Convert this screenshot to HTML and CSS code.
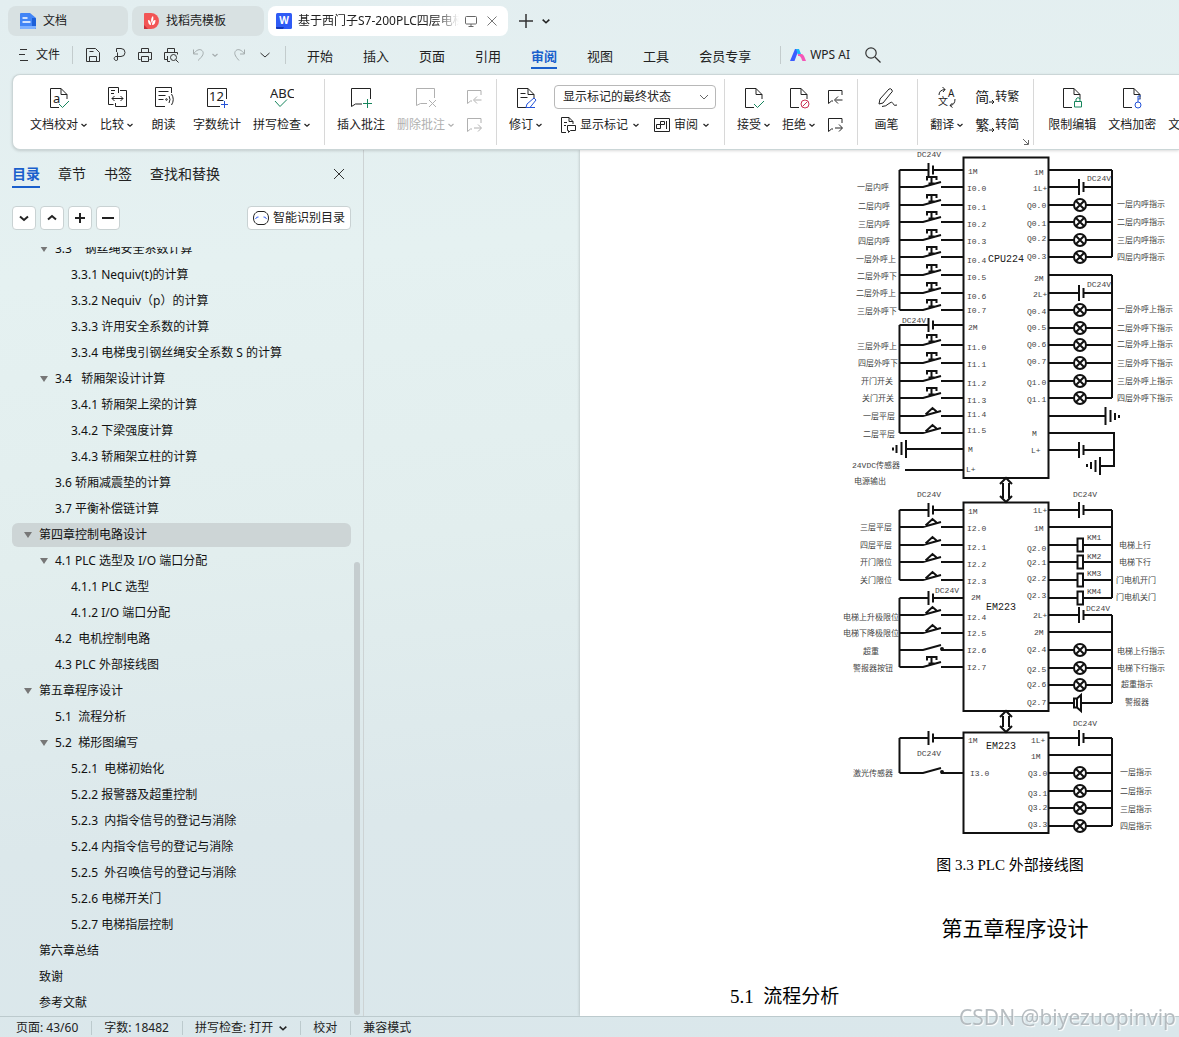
FILE: index.html
```
<!DOCTYPE html>
<html lang="zh-CN">
<head>
  <meta charset="UTF-8" />
  <meta name="viewport" content="width=device-width, initial-scale=1" />
  <title>基于西门子S7-200PLC四层电梯</title>
  <link rel="stylesheet" href="styles.css">
</head>
<body>
  <!-- shared icon shapes -->
  <svg class="defs" width="0" height="0" aria-hidden="true">
    <symbol id="caret" viewBox="0 0 6 6"><path d="M.5 2 3 4.300 5.500 2" fill="none" stroke="currentColor" stroke-width="1.200"/></symbol>
    <symbol id="page" viewBox="0 0 24 24"><path d="M14 3.500H3.500v19H12M14 3.500l6 6V14M14 3.500v6h6" fill="none" stroke="currentColor"/></symbol>
    <symbol id="prev" viewBox="0 0 16 16"><path d="M15 6V1.500H1.500v13l3-2.500H6M15.500 11h-7M11 7.500 7.500 11l3.500 3.500" fill="none" stroke="currentColor"/></symbol>
    <symbol id="next" viewBox="0 0 16 16"><path d="M15 6V1.500H1.500v13l3-2.500H6M8 11h7M12 7.500l3.500 3.500-3.500 3.500" fill="none" stroke="currentColor"/></symbol>

    <!-- circuit parts, origin on the wire -->
    <g id="cell-l"><path d="M59.500 0h29M93 0h30M88.500-7V7M93-4.500v9"/></g>
    <g id="cell-r"><path d="M208.500 0h30.500M243.500 0H272M239-8V8M243.500-5v10"/></g>
    <g id="open"><path d="M59.500 0H83l18-5M101 0h22"/></g>
    <g id="push"><path d="M59.500 0H83l18-5M101 0h22M87-6.500V-10h9.500v3M91.500-10v6.500M88.500-3.500h6"/></g>
    <g id="limit"><path d="M59.500 0H83l18-5M101 0h22M85.500-1.500l7-6.500 4 3.500"/></g>
    <g id="dot"><path d="M59.500 0H83l18-5M101 0h22"/><circle cx="102" cy="-1" r="1"/></g>
    <g id="lamp"><path d="M208.500 0H234M246 0h26M236-4l8 8M244-4l-8 8"/><circle cx="240" cy="0" r="6"/></g>
    <g id="coil"><path d="M208.500 0h29M243 0h29M237.500-6.500h5.500v13h-5.500z"/></g>
    <g id="horn"><path d="M208.500 0H234M241 0h31M234-4.500h3v9h-3zM237-4.500l4-3.500V8l-4-3.500"/></g>
    <g id="bare"><path d="M208.500 0H272"/></g>
  </svg>

  <header>
    <div class="titlebar">
      <button class="doc-tab">
        <svg width="16" height="16" viewBox="0 0 16 16"><path d="M1 0h9l6 5v10a1 1 0 0 1-1 1H1a1 1 0 0 1-1-1V1a1 1 0 0 1 1-1z" fill="#4285f6"/><path d="M12 5h3a1 1 0 0 1 1 1v9a1 1 0 0 1-1 1h-3z" fill="#1c5fd8"/><path d="M0 13h16v2a1 1 0 0 1-1 1H1a1 1 0 0 1-1-1z" fill="#7db0ff"/><path d="M2.500 5h5M2.500 9h8" stroke="#fff" stroke-width="1.400"/></svg>
        <span>文档</span>
      </button>
      <button class="doc-tab second">
        <svg width="15" height="16" viewBox="0 0 15 16"><path d="M0 1a1 1 0 0 1 1-1h6a8 8 0 0 1 0 16H0z" fill="#f25555"/><path d="M0 12l4 4H0z" fill="#c62f3a"/><path d="M4 7c2 0 3 2 3 5-2 0-3-2-3-5zM7.500 10c-1-3 0-6 1.500-7 1 3 0 5-1.500 7zM8 12c0-3 1-5 3.500-5 0 3-1 5-3.500 5z" fill="#fff"/></svg>
        <span>找稻壳模板</span>
      </button>
      <div class="doc-tab current">
        <svg width="16" height="16" viewBox="0 0 16 16"><rect width="16" height="16" rx="1.500" fill="#2f5bf5"/><path d="M0 14h8l-1 2H1.500A1.500 1.500 0 0 1 0 14z" fill="#1237b8"/><text x="8" y="11" text-anchor="middle" class="w-mark">W</text></svg>
        <span class="fade">基于西门子S7-200PLC四层电梯</span>
        <svg width="12" height="12" viewBox="0 0 12 12" fill="none" stroke="#666"><rect x=".5" y="1.500" width="11" height="7.500" rx="1"/><path d="M3.500 11.500h5M6 9v2"/></svg>
        <button class="plain close" aria-label="关闭标签"><svg width="10" height="10" viewBox="0 0 10 10" stroke="#777"><path d="M.5.5l9 9M9.500.5l-9 9"/></svg></button>
      </div>
      <button class="plain add" aria-label="新建"><svg width="14" height="14" viewBox="0 0 14 14" stroke="#333" stroke-width="1.500"><path d="M7 0v14M0 7h14"/></svg></button>
      <button class="plain" aria-label="标签列表"><svg width="8" height="8"><use href="#caret"/></svg></button>
    </div>

    <div class="menubar">
      <button class="plain file"><svg width="9" height="12" viewBox="0 0 9 12" stroke="#333"><path d="M1 .5h7M0 5.500h6M1 11.500h8"/></svg>文件</button>
      <i class="rule"></i>
      <div class="quick">
        <button class="plain" aria-label="保存"><svg width="16" height="16" viewBox="0 0 16 16"><path d="M1.500 1.500h9l4 4v9h-13zM4.500 14V9.500h7V14M4.500 4.500h4"/></svg></button>
        <button class="plain" aria-label="输出为PDF"><svg width="16" height="16" viewBox="0 0 16 16"><path d="M5.500 5V1.500H10a3.700 3.700 0 0 1 0 8H5a2 2 0 1 0 1.500 3.500V5.500"/></svg></button>
        <button class="plain" aria-label="打印"><svg width="16" height="16" viewBox="0 0 16 16"><path d="M4.500 5V1.500h7V5M3.500 12.500h-2v-7h13v7h-2M4.500 9.500h7v5h-7z"/></svg></button>
        <button class="plain" aria-label="打印预览"><svg width="16" height="16" viewBox="0 0 16 16"><path d="M4.500 5V1.500h7V5M4 12.500H1.500v-7h13v2M4.500 9v5.500H7M13 13l2.500 2.500"/><circle cx="10.500" cy="10.500" r="3"/></svg></button>
        <button class="plain off" aria-label="撤销"><svg width="14" height="14" viewBox="0 0 14 14"><path d="M1.500 1.500v4.500H6M1.500 6C4 2 8 .5 10 2.500c2.500 2.500 1 5.500-4 10"/></svg><svg class="tiny" width="6" height="6"><use href="#caret"/></svg></button>
        <button class="plain off" aria-label="恢复"><svg width="14" height="14" viewBox="0 0 14 14"><path d="M12.500 1.500v4.500H8M12.500 6C10 2 6 .5 4 2.500 1.500 5 3 8 7 12.500"/></svg></button>
        <button class="plain" aria-label="更多"><svg width="10" height="10" viewBox="0 0 10 10"><path d="M.5 3 5 7l4.500-4"/></svg></button>
      </div>
      <i class="rule"></i>
      <nav class="menu">
        <a href="#">开始</a><a href="#">插入</a><a href="#">页面</a><a href="#">引用</a><a href="#" class="active">审阅</a><a href="#">视图</a><a href="#">工具</a><a href="#">会员专享</a>
      </nav>
      <i class="rule"></i>
      <button class="plain ai">
        <svg width="16" height="12" viewBox="0 0 16 12"><path d="M5 0h4L4.500 12H0z" fill="#3b5cff"/><path d="M6 0h3l2 5-3 1z" fill="#18b7f5"/><path d="M8 5h3.500c2 0 3 3 4.500 7h-3.500C11 9 11 7 8 7z" fill="#f456b8"/></svg>
        WPS AI
      </button>
      <button class="plain" aria-label="搜索"><svg width="16" height="16" viewBox="0 0 16 16" fill="none" stroke="#333" stroke-width="1.200"><circle cx="6" cy="6" r="5.200"/><path d="M10 10l5.500 5.500"/></svg></button>
    </div>
  </header>

  <div class="ribbon">
    <div class="group">
      <button class="tool"><svg width="24" height="24"><use href="#page"/><text x="6" y="18" class="glyph">a</text><path d="M12 19l3.500 3.500L22 16" class="green"/></svg><span>文档校对<svg class="tiny" width="6" height="6"><use href="#caret"/></svg></span></button>
      <button class="tool"><svg width="24" height="24" viewBox="0 0 24 24"><path d="M13.500 8V2.500h-10v17h5M15 5.500h6.500v16h-11V18M6 5.500h4M6 8.500h3M7 13.500h11M9.500 11 7 13.500 9.500 16M15.500 11l2.500 2.500-2.500 2.500"/></svg><span>比较<svg class="tiny" width="6" height="6"><use href="#caret"/></svg></span></button>
      <button class="tool"><svg width="24" height="24" viewBox="0 0 24 24"><path d="M19.500 8V2.500h-16v19H13M6.500 6.500h10M6.500 10.500h7M6.500 14.500h5M17 11q2 3.500 0 7M19.500 9q3.500 5.500 0 11"/><circle cx="14.500" cy="14.500" r=".8"/></svg><span>朗读</span></button>
      <button class="tool"><svg width="24" height="24" viewBox="0 0 24 24"><path d="M21.500 14V3.500h-19v18H15"/><text x="4" y="16" class="glyph">12</text><path d="M19.500 16v7M16 19.500h7" class="blue"/></svg><span>字数统计</span></button>
      <button class="tool"><svg width="24" height="24" viewBox="0 0 24 24"><text x="0" y="13" class="glyph">ABC</text><path d="M5 16l5 5.500 7-7" class="green"/></svg><span>拼写检查<svg class="tiny" width="6" height="6"><use href="#caret"/></svg></span></button>
    </div>
    <div class="group">
      <button class="tool"><svg width="24" height="24" viewBox="0 0 24 24"><path d="M21.500 14V3.500h-19v18l4-2.500H13"/><path d="M18.500 14v9M14 18.500h9" class="green"/></svg><span>插入批注</span></button>
      <button class="tool" disabled><svg width="24" height="24" viewBox="0 0 24 24"><path d="M20.500 13V3.500h-18v17l4-2H13M15 15l7 7M22 15l-7 7"/></svg><span>删除批注<svg class="tiny" width="6" height="6"><use href="#caret"/></svg></span></button>
      <div class="stack">
        <button class="plain" disabled aria-label="上一条批注"><svg width="16" height="16"><use href="#prev"/></svg></button>
        <button class="plain" disabled aria-label="下一条批注"><svg width="16" height="16"><use href="#next"/></svg></button>
      </div>
    </div>
    <div class="group track">
      <button class="tool"><svg width="24" height="24"><use href="#page"/><path d="M6.500 8.500h5M6.500 12.500h7"/><path d="M12 22.500l1-3.500 7-6 2 2-6 7.500zM12 22.500h9" class="blue"/></svg><span>修订<svg class="tiny" width="6" height="6"><use href="#caret"/></svg></span></button>
      <div class="stack">
        <div class="select-box">
          <select aria-label="修订显示状态"><option>显示标记的最终状态</option></select>
          <svg width="10" height="10" viewBox="0 0 10 10"><path d="M1 3l4 4 4-4"/></svg>
        </div>
        <div class="pair">
          <button class="plain"><svg width="16" height="16" viewBox="0 0 16 16"><path d="M6 15.500H1.500V.5H9l4 4V7M9 .5v4h4M4 5.500h3M4 8.500h2M7.500 8.500h8v5h-5l-2 2v-2h-1z"/></svg>显示标记<svg class="tiny" width="6" height="6"><use href="#caret"/></svg></button>
          <button class="plain"><svg width="16" height="16" viewBox="0 0 16 16"><path d="M.5 1.500h15v13H.5zM12.500 4v8M6.500 4.500h4v3h-4zM2.500 7.500h4v4h-4z"/></svg>审阅<svg class="tiny" width="6" height="6"><use href="#caret"/></svg></button>
        </div>
      </div>
    </div>
    <div class="group">
      <button class="tool"><svg width="24" height="24"><use href="#page"/><path d="M12 19l3.500 3.500L22 16" class="green"/></svg><span>接受<svg class="tiny" width="6" height="6"><use href="#caret"/></svg></span></button>
      <button class="tool"><svg width="24" height="24"><use href="#page"/><circle cx="18" cy="19" r="4" class="red"/><path d="M15.500 21.500l5-5" class="red"/></svg><span>拒绝<svg class="tiny" width="6" height="6"><use href="#caret"/></svg></span></button>
      <div class="stack">
        <button class="plain" aria-label="上一条修订"><svg width="16" height="16"><use href="#prev"/></svg></button>
        <button class="plain" aria-label="下一条修订"><svg width="16" height="16"><use href="#next"/></svg></button>
      </div>
    </div>
    <div class="group">
      <button class="tool"><svg width="24" height="24" viewBox="0 0 24 24"><path d="M4 19l1-5L14 4q2-1 3 1t-1 3L8 18zM7 21.500q4 0 7-3t4 0 4 1.500"/></svg><span>画笔</span></button>
    </div>
    <div class="group">
      <button class="tool"><svg width="24" height="24" viewBox="0 0 24 24"><text x="13" y="12" class="glyph small">A</text><text x="3" y="20" class="glyph small">文</text><path d="M4 10q0-5 6-5.500M7.500 2 10 4.500 8 7M20 14q0 6-5 6.500M17.500 18 15 20.500l2.500 2"/></svg><span>翻译<svg class="tiny" width="6" height="6"><use href="#caret"/></svg></span></button>
      <div class="stack">
        <button class="plain convert"><span class="han">简</span><svg width="6" height="6" viewBox="0 0 6 6"><path d="M0 3h5M3 1l2 2-2 2"/></svg>转繁</button>
        <button class="plain convert"><span class="han">繁</span><svg width="6" height="6" viewBox="0 0 6 6"><path d="M0 3h5M3 1l2 2-2 2"/></svg>转简</button>
      </div>
      <button class="plain launcher" aria-label="更多选项"><svg width="6" height="6" viewBox="0 0 6 6"><path d="M0 0l5 5M5.500 1v4.500H1"/></svg></button>
    </div>
    <div class="group">
      <button class="tool"><svg width="24" height="24"><use href="#page"/><path d="M14.500 16.500h7v5.500h-7zM16 16v-2q2-3 4 0v2" class="green"/></svg><span>限制编辑</span></button>
      <button class="tool"><svg width="24" height="24"><use href="#page"/><circle cx="18" cy="20" r="3" class="blue"/><path d="M18 17v-6h3M18 14h2.500" class="blue"/></svg><span>文档加密</span></button>
      <button class="tool"><svg width="24" height="24"><use href="#page"/></svg><span>文档定稿</span></button>
    </div>
  </div>

  <main>
    <aside>
      <nav class="side-tabs">
        <a href="#" class="active">目录</a><a href="#">章节</a><a href="#">书签</a><a href="#">查找和替换</a>
        <button class="plain" aria-label="关闭导航"><svg width="10" height="10" viewBox="0 0 10 10" stroke="#333"><path d="M0 0l10 10M10 0 0 10"/></svg></button>
      </nav>
      <div class="side-tools">
        <button aria-label="展开"><svg width="12" height="12" viewBox="0 0 12 12"><path d="M2 4.500 6 8l4-3.500"/></svg></button>
        <button aria-label="收起"><svg width="12" height="12" viewBox="0 0 12 12"><path d="M2 7.500 6 4l4 3.500"/></svg></button>
        <button aria-label="升级"><svg width="12" height="12" viewBox="0 0 12 12"><path d="M6 1v10M1 6h10"/></svg></button>
        <button aria-label="降级"><svg width="12" height="12" viewBox="0 0 12 12"><path d="M0 6h12"/></svg></button>
        <button class="smart"><svg width="16" height="16" viewBox="0 0 16 16"><path d="M5 1.500h6q4.500 1.500 4.500 6.500T11 14.500H5Q.5 13 .5 8T5 1.500z"/><path d="M2.500 9q1-2.500 3-2M10.500 7q2-.5 3 2" class="eyes"/></svg>智能识别目录</button>
      </div>
      <ul class="tree">
        <li class="l2 open"><a href="#">3.3    钢丝绳安全系数计算</a></li>
        <li class="l3"><a href="#">3.3.1 Nequiv(t)的计算</a></li>
        <li class="l3"><a href="#">3.3.2 Nequiv（p）的计算</a></li>
        <li class="l3"><a href="#">3.3.3 许用安全系数的计算</a></li>
        <li class="l3"><a href="#">3.3.4 电梯曳引钢丝绳安全系数 S 的计算</a></li>
        <li class="l2 open"><a href="#">3.4   轿厢架设计计算</a></li>
        <li class="l3"><a href="#">3.4.1 轿厢架上梁的计算</a></li>
        <li class="l3"><a href="#">3.4.2 下梁强度计算</a></li>
        <li class="l3"><a href="#">3.4.3 轿厢架立柱的计算</a></li>
        <li class="l2"><a href="#">3.6 轿厢减震垫的计算</a></li>
        <li class="l2"><a href="#">3.7 平衡补偿链计算</a></li>
        <li class="l1 open selected"><a href="#">第四章控制电路设计</a></li>
        <li class="l2 open"><a href="#">4.1 PLC 选型及 I/O 端口分配</a></li>
        <li class="l3"><a href="#">4.1.1 PLC 选型</a></li>
        <li class="l3"><a href="#">4.1.2 I/O 端口分配</a></li>
        <li class="l2"><a href="#">4.2  电机控制电路</a></li>
        <li class="l2"><a href="#">4.3 PLC 外部接线图</a></li>
        <li class="l1 open"><a href="#">第五章程序设计</a></li>
        <li class="l2"><a href="#">5.1  流程分析</a></li>
        <li class="l2 open"><a href="#">5.2  梯形图编写</a></li>
        <li class="l3"><a href="#">5.2.1  电梯初始化</a></li>
        <li class="l3"><a href="#">5.2.2 报警器及超重控制</a></li>
        <li class="l3"><a href="#">5.2.3  内指令信号的登记与消除</a></li>
        <li class="l3"><a href="#">5.2.4 内指令信号的登记与消除</a></li>
        <li class="l3"><a href="#">5.2.5  外召唤信号的登记与消除</a></li>
        <li class="l3"><a href="#">5.2.6 电梯开关门</a></li>
        <li class="l3"><a href="#">5.2.7 电梯指层控制</a></li>
        <li class="l1"><a href="#">第六章总结</a></li>
        <li class="l1"><a href="#">致谢</a></li>
        <li class="l1"><a href="#">参考文献</a></li>
      </ul>
      <i class="thumb"></i>
    </aside>

    <section class="canvas">
      <article class="paper">
        <figure>
          <svg class="wiring" width="340" height="700" viewBox="0 0 340 700">
            <g class="wires">
              <!-- CPU224 -->
              <path d="M123.500 7.500h85V328h-85zM59.500 20v140M59.500 175v108M272 20v87M272 125v123"/>
              <use href="#cell-l" y="20"/><use href="#push" y="37"/><use href="#push" y="55"/><use href="#push" y="72"/><use href="#push" y="90"/>
              <use href="#push" y="107"/><use href="#push" y="125"/><use href="#push" y="143"/><use href="#push" y="160"/>
              <use href="#cell-l" y="175"/><use href="#push" y="195"/><use href="#push" y="213"/><use href="#push" y="231"/><use href="#push" y="248"/>
              <use href="#limit" y="266"/><use href="#limit" y="283"/>
              <path d="M66 299h57M66 290v18M61.500 292v13M56.500 295v8M53 297.500v3M65 320h58"/>
              <use href="#bare" y="20"/><use href="#cell-r" y="37"/><use href="#lamp" y="55"/><use href="#lamp" y="72"/><use href="#lamp" y="90"/><use href="#lamp" y="107"/>
              <use href="#bare" y="125"/><use href="#cell-r" y="143"/><use href="#lamp" y="160"/><use href="#lamp" y="178"/><use href="#lamp" y="195"/>
              <use href="#lamp" y="213"/><use href="#lamp" y="231"/><use href="#lamp" y="248"/>
              <path d="M208.500 266h57M265.500 257v18M270.500 260v12M275 263v7M279 265v3M208.500 283H274v33h-14M260 307v18M255.500 310v12M251 312v7M247 314v3"/>
              <path d="M208.500 300H239M243.500 300H274M239 292v16M243.500 295v10"/>
              <path d="M163 333v15M169 333v15M160 334l6-6 6 6M160 346l6 6 6-6"/>

              <!-- EM223, first module -->
              <path d="M123.500 352.500h85V561h-85zM59.500 360v70M59.500 448v69M272 360v88M272 465v88"/>
              <use href="#cell-l" y="360"/><use href="#limit" y="377"/><use href="#limit" y="395"/><use href="#limit" y="412"/><use href="#limit" y="430"/>
              <use href="#cell-l" y="448"/><use href="#limit" y="465"/><use href="#limit" y="483"/><use href="#dot" y="500"/><use href="#push" y="517"/>
              <use href="#cell-r" y="360"/><use href="#bare" y="377"/><use href="#coil" y="395"/><use href="#coil" y="412"/><use href="#coil" y="430"/><use href="#coil" y="448"/>
              <use href="#cell-r" y="465"/><use href="#bare" y="482"/><use href="#lamp" y="500"/><use href="#lamp" y="518"/><use href="#lamp" y="535"/><use href="#horn" y="553"/>
              <path d="M163 566v11M169 566v11M160 567l6-6 6 6M160 576l6 6 6-6"/>

              <!-- EM223, second module -->
              <path d="M123.500 582.500h85V683h-85zM59.500 588v35M272 588v88"/>
              <use href="#cell-l" y="588"/><use href="#dot" y="623"/>
              <use href="#cell-r" y="588"/><use href="#bare" y="605"/><use href="#lamp" y="623"/><use href="#lamp" y="641"/><use href="#lamp" y="658"/><use href="#lamp" y="676"/>
            </g>

            <g class="chip"><text x="148" y="112">CPU224</text><text x="146" y="460">EM223</text><text x="146" y="599">EM223</text></g>

            <g class="pins">
              <text x="128" y="24">1M</text><text x="127" y="41">I0.0</text><text x="127" y="60">I0.1</text><text x="127" y="77">I0.2</text><text x="127" y="94">I0.3</text>
              <text x="127" y="113">I0.4</text><text x="127" y="130">I0.5</text><text x="127" y="149">I0.6</text><text x="127" y="163">I0.7</text><text x="128" y="180">2M</text>
              <text x="127" y="200">I1.0</text><text x="127" y="217">I1.1</text><text x="127" y="236">I1.2</text><text x="127" y="253">I1.3</text><text x="127" y="267">I1.4</text>
              <text x="127" y="283">I1.5</text><text x="128" y="302">M</text><text x="126" y="322">L+</text>
              <text x="194" y="25">1M</text><text x="193" y="41">1L+</text><text x="187" y="58">Q0.0</text><text x="187" y="76">Q0.1</text><text x="187" y="91">Q0.2</text><text x="187" y="109">Q0.3</text>
              <text x="194" y="131">2M</text><text x="193" y="147">2L+</text><text x="187" y="164">Q0.4</text><text x="187" y="180">Q0.5</text><text x="187" y="197">Q0.6</text>
              <text x="187" y="214">Q0.7</text><text x="187" y="235">Q1.0</text><text x="187" y="252">Q1.1</text><text x="192" y="286">M</text><text x="191" y="303">L+</text>

              <text x="128" y="364">1M</text><text x="127" y="381">I2.0</text><text x="127" y="400">I2.1</text><text x="127" y="417">I2.2</text><text x="127" y="434">I2.3</text>
              <text x="131" y="450">2M</text><text x="127" y="470">I2.4</text><text x="127" y="486">I2.5</text><text x="127" y="503">I2.6</text><text x="127" y="520">I2.7</text>
              <text x="193" y="363">1L+</text><text x="194" y="381">1M</text><text x="187" y="401">Q2.0</text><text x="187" y="415">Q2.1</text><text x="187" y="431">Q2.2</text><text x="187" y="448">Q2.3</text>
              <text x="193" y="468">2L+</text><text x="194" y="485">2M</text><text x="187" y="502">Q2.4</text><text x="187" y="522">Q2.5</text><text x="187" y="537">Q2.6</text><text x="187" y="555">Q2.7</text>

              <text x="128" y="593">1M</text><text x="130" y="626">I3.0</text><text x="191" y="593">1L+</text><text x="191" y="609">1M</text>
              <text x="188" y="626">Q3.0</text><text x="188" y="646">Q3.1</text><text x="188" y="660">Q3.2</text><text x="188" y="677">Q3.3</text>

              <text x="77" y="7">DC24V</text><text x="247" y="31">DC24V</text><text x="62" y="173">DC24V</text><text x="247" y="137">DC24V</text>
              <text x="77" y="347">DC24V</text><text x="233" y="347">DC24V</text><text x="95" y="443">DC24V</text><text x="246" y="461">DC24V</text>
              <text x="77" y="606">DC24V</text><text x="233" y="576">DC24V</text>
              <text x="247" y="390">KM1</text><text x="247" y="409">KM2</text><text x="247" y="426">KM3</text><text x="247" y="444">KM4</text>
            </g>

            <g class="names">
              <text x="17" y="40">一层内呼</text><text x="18" y="59">二层内呼</text><text x="18" y="77">三层内呼</text><text x="18" y="94">四层内呼</text>
              <text x="16" y="112">一层外呼上</text><text x="17" y="129">二层外呼下</text><text x="16" y="146">二层外呼上</text><text x="17" y="164">三层外呼下</text>
              <text x="17" y="199">三层外呼上</text><text x="18" y="216">四层外呼下</text><text x="21" y="234">开门开关</text><text x="22" y="251">关门开关</text>
              <text x="23" y="269">一层平层</text><text x="23" y="287">二层平层</text><text x="12" y="318">24VDC传感器</text><text x="14" y="334">电源输出</text>
              <text x="20" y="380">三层平层</text><text x="20" y="398">四层平层</text><text x="20" y="415">开门限位</text><text x="20" y="433">关门限位</text>
              <text x="3" y="470">电梯上升极限位</text><text x="3" y="486">电梯下降极限位</text><text x="23" y="504">超重</text><text x="13" y="521">警报器按钮</text><text x="13" y="626">激光传感器</text>

              <text x="277" y="57">一层内呼指示</text><text x="277" y="75">二层内呼指示</text><text x="277" y="93">三层内呼指示</text><text x="277" y="110">四层内呼指示</text>
              <text x="277" y="162">一层外呼上指示</text><text x="277" y="181">二层外呼下指示</text><text x="277" y="197">二层外呼上指示</text><text x="277" y="216">三层外呼下指示</text>
              <text x="277" y="234">三层外呼上指示</text><text x="277" y="251">四层外呼下指示</text>
              <text x="279" y="398">电梯上行</text><text x="279" y="415">电梯下行</text><text x="276" y="433">门电机开门</text><text x="276" y="450">门电机关门</text>
              <text x="277" y="504">电梯上行指示</text><text x="277" y="521">电梯下行指示</text><text x="281" y="537">超重指示</text><text x="285" y="555">警报器</text>
              <text x="280" y="625">一层指示</text><text x="280" y="644">二层指示</text><text x="280" y="662">三层指示</text><text x="280" y="679">四层指示</text>
            </g>
          </svg>
          <figcaption>图 3.3 PLC 外部接线图</figcaption>
        </figure>
        <h1>第五章程序设计</h1>
        <h2>5.1  流程分析</h2>
      </article>
    </section>
  </main>

  <footer>
    <span>页面: 43/60</span><span>字数: 18482</span>
    <button class="plain">拼写检查: 打开<svg class="tiny" width="8" height="8"><use href="#caret"/></svg></button>
    <span>校对</span><span>兼容模式</span>
  </footer>
  <div class="watermark">CSDN @biyezuopinvip</div>
</body>
</html>
```
FILE: styles.css
```
* {
  box-sizing: border-box;
}
body {
  margin: 0;
  height: 100vh;
  overflow: hidden;
  display: flex;
  flex-direction: column;
  font: 12px/16px "Noto Sans", "Noto Sans CJK SC", sans-serif;
  color: #222;
  background: linear-gradient(175deg, #e3eef0 0%, #e5f1f1 25%, #e2eeee 50%, #dce8eb 75%, #dae7eb 100%);
}
button {
  font: inherit;
  color: inherit;
}
a {
  color: inherit;
  text-decoration: none;
}
svg {
  flex: none;
  display: block;
}
.defs {
  position: absolute;
}
.plain {
  display: flex;
  align-items: center;
  padding: 0;
  border: 0;
  background: none;
  white-space: nowrap;
}

/* title bar */
.titlebar {
  display: flex;
  align-items: center;
  gap: 4px;
  padding: 6px 8px 0;
}
.doc-tab {
  display: flex;
  align-items: center;
  gap: 7px;
  width: 120px;
  height: 30px;
  padding: 0 12px;
  border: 0;
  border-radius: 8px;
  background: #d8e1e2;
}
.doc-tab.second {
  width: 132px;
}
.doc-tab.current {
  width: 240px;
  padding: 0 10px 0 8px;
  gap: 6px;
  background: #fff;
}
.fade {
  width: 161px;
  overflow: hidden;
  white-space: nowrap;
  -webkit-mask-image: linear-gradient(to right, #000 85%, transparent);
  mask-image: linear-gradient(to right, #000 85%, transparent);
}
.close {
  margin-left: 4px;
}
.add {
  margin: 0 5px 0 7px;
}
.w-mark {
  font: bold 10px "Noto Sans", sans-serif;
  fill: #fff;
}

/* menu row */
.menubar {
  display: flex;
  align-items: center;
  height: 38px;
  padding-left: 19px;
}
.file {
  gap: 8px;
}
.rule {
  width: 1px;
  height: 18px;
  background: #c3cccd;
}
.menubar .rule {
  margin-left: 12px;
}
.quick {
  display: flex;
  align-items: center;
  gap: 10px;
  padding: 0 3px 0 12px;
}
.quick svg {
  fill: none;
  stroke: #333;
}
.quick .off {
  color: #a4acad;
  gap: 6px;
  margin-left: 3px;
}
.quick .off svg {
  stroke: #a4acad;
}
.quick .off + .off {
  margin: 0 4px;
}
.menu {
  display: flex;
  gap: 30px;
  padding: 0 17px 0 21px;
  font-size: 13px;
  white-space: nowrap;
}
.menu a {
  padding: 6px 0 3px;
  border-bottom: 2px solid transparent;
}
.menu .active,
.side-tabs .active {
  color: #1a5fcc;
  font-weight: bold;
  border-color: #1a5fcc;
}
.ai {
  gap: 4px;
  margin: 0 15px 0 9px;
}

/* ribbon */
.ribbon {
  display: flex;
  flex: none;
  height: 76px;
  margin-left: 12px;
  overflow: hidden;
  background: #fff;
  border: 1px solid #cbd6d7;
  border-right: 0;
  border-radius: 8px 0 0 8px;
  box-shadow: 0 1px 3px rgba(0, 0, 0, 0.15);
  position: relative;
  z-index: 1;
}
.group {
  position: relative;
  display: flex;
  flex: none;
  gap: 12px;
  padding: 6px 14px 0 12px;
  margin: 4px 0;
  border-right: 1px solid #d8d8d8;
}
.group:first-child {
  padding-left: 17px;
}
.group:last-child {
  padding-left: 14px;
  border: 0;
}
.group.track {
  padding-right: 8px;
}
.tool {
  display: flex;
  flex-direction: column;
  align-items: center;
  gap: 8px;
  min-width: 33px;
  padding: 0;
  border: 0;
  background: none;
  white-space: nowrap;
}
.group:first-child .tool {
  min-width: 35px;
}
.tool > span {
  display: flex;
  align-items: center;
  gap: 3px;
}
.ribbon svg {
  fill: none;
  stroke: currentColor;
}
.ribbon text {
  stroke: none;
  fill: #222;
}
.ribbon .green {
  stroke: #16855c;
}
.ribbon .blue {
  stroke: #2352d8;
}
.ribbon .red {
  stroke: #cc3355;
}
.ribbon button:disabled {
  color: #b0b0b0;
}
.glyph {
  font: 13px "Noto Sans", sans-serif;
}
.glyph.small {
  font: 10px "Noto Sans", "Noto Sans CJK SC", sans-serif;
}
.stack {
  display: flex;
  flex-direction: column;
  gap: 12px;
  padding-top: 4px;
}
.track .stack {
  padding: 0;
  gap: 8px;
}
.select-box {
  position: relative;
  width: 162px;
}
.select-box select {
  width: 100%;
  height: 24px;
  padding: 0 8px;
  appearance: none;
  font: inherit;
  color: inherit;
  background: #fff;
  border: 1px solid #b8b8b8;
  border-radius: 4px;
}
.select-box svg {
  position: absolute;
  top: 7px;
  right: 7px;
  color: #666;
}
.pair {
  display: flex;
  justify-content: space-between;
  padding: 0 7px 0 6px;
}
.pair .plain {
  gap: 4px;
}
.pair .tiny {
  margin-left: 1px;
}
.convert {
  height: 16px;
}
.convert svg {
  align-self: flex-end;
}
.han {
  font-size: 14px;
}
.launcher {
  position: absolute;
  right: 4px;
  bottom: 0;
  color: #666;
}

/* navigation pane */
main {
  display: flex;
  flex: 1;
  min-height: 0;
}
aside {
  position: relative;
  display: flex;
  flex: none;
  flex-direction: column;
  width: 364px;
  border-right: 1px solid #cdd3d4;
}
.side-tabs {
  display: flex;
  align-items: center;
  gap: 18px;
  padding: 10px 19px 0 12px;
  font-size: 14px;
  line-height: 20px;
}
.side-tabs a {
  padding: 4px 0 2px;
  border-bottom: 2px solid transparent;
}
.side-tabs button {
  margin-left: auto;
}
.side-tools {
  display: flex;
  gap: 4px;
  padding: 18px 12px 17px;
}
.side-tools button {
  display: flex;
  align-items: center;
  justify-content: center;
  width: 24px;
  height: 24px;
  padding: 0;
  background: #fff;
  border: 1px solid #c9d2d3;
  border-radius: 4px;
}
.side-tools svg {
  fill: none;
  stroke: #222;
  stroke-width: 2;
}
.side-tools .smart {
  width: 104px;
  margin-left: auto;
  gap: 4px;
}
.side-tools .smart svg {
  stroke-width: 1;
}
.smart .eyes {
  stroke: #2f5bf5;
}
.tree {
  flex: 1;
  min-height: 0;
  margin: 0;
  padding: 0 12px;
  overflow: hidden;
  list-style: none;
  color: #111;
}
.tree li {
  position: relative;
  height: 24px;
  margin-bottom: 2px;
  border-radius: 6px;
  line-height: 24px;
  white-space: pre;
}
.tree li:first-child {
  margin-top: -10px;
}
.l1 {
  padding-left: 27px;
}
.l2 {
  padding-left: 43px;
}
.l3 {
  padding-left: 59px;
}
.open::before {
  content: "";
  position: absolute;
  top: 9px;
  margin-left: -15px;
  border: 4px solid transparent;
  border-top: 6px solid #777;
  border-bottom: 0;
}
.selected {
  background: #cdd5d6;
}
.thumb {
  position: absolute;
  right: 3px;
  bottom: 1px;
  width: 6px;
  height: 453px;
  border-radius: 3px;
  background: #c5cdcf;
}

/* document */
.canvas {
  flex: 1;
  display: flex;
  min-width: 0;
  overflow: hidden;
}
.paper {
  flex: none;
  width: 860px;
  margin-left: 216px;
  padding: 0 150px;
  background: #fff;
  box-shadow: 0 0 3px rgba(0, 0, 0, 0.25);
  font-family: "Liberation Serif", "Noto Sans CJK SC", serif;
  color: #000;
}
figure {
  margin: 0;
}
.wiring {
  margin: 0 auto;
}
.wires {
  fill: none;
  stroke: #111;
  stroke-width: 2;
}
.pins,
.names {
  font: 8px "Liberation Mono", "Noto Sans CJK SC", monospace;
  fill: #444;
}
.chip {
  font: 10px "Liberation Mono", monospace;
  fill: #222;
}
figcaption {
  margin-top: 3px;
  font-size: 15px;
  line-height: 24px;
  text-align: center;
}
h1 {
  margin: 36px 0 0 10px;
  font-size: 21px;
  line-height: 32px;
  font-weight: normal;
  text-align: center;
}
h2 {
  margin: 38px 0 0;
  font-size: 19px;
  line-height: 28px;
  font-weight: normal;
  white-space: pre;
}

/* status bar */
footer {
  display: flex;
  flex: none;
  align-items: center;
  height: 21px;
  padding: 2px 0 0 3px;
  border-top: 1px solid #bccacd;
}
footer > .plain,
footer > span {
  height: 14px;
  padding: 0 13px 0 12px;
  border-left: 1px solid #bccacd;
  line-height: 14px;
}
footer > span:first-child {
  border-color: transparent;
}
footer .tiny {
  margin-left: 6px;
}
.watermark {
  position: fixed;
  right: 3px;
  bottom: 5px;
  z-index: 2;
  font: 21px/30px "Noto Sans", sans-serif;
  color: rgba(170, 178, 182, 0.85);
  text-shadow: 1px 1px 1px #fff;
}
```
